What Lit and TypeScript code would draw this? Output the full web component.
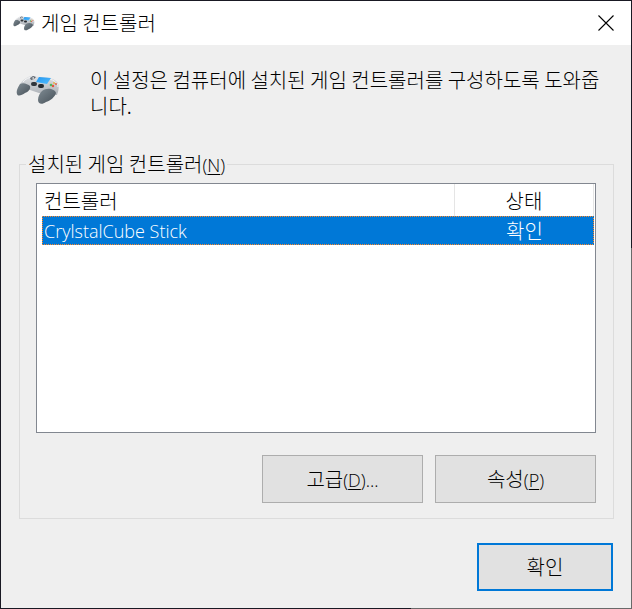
import { LitElement, html, css, svg } from "lit";
import { customElement, state } from "lit/decorators.js";

@customElement("gamepad-icon")
class GamepadIcon extends LitElement {
  static styles = css`
    :host { display: block; }
    svg { display: block; width: 100%; height: auto; }
  `;

  render() {
    return html`<svg viewBox="0 0 44 30" aria-hidden="true">
      <defs>
        <linearGradient id="body" x1="0" y1="0" x2="0" y2="1">
          <stop offset="0" stop-color="#dfe1e4" /><stop offset="1" stop-color="#adb1b7" />
        </linearGradient>
        <linearGradient id="grip" x1="0" y1="0" x2="1" y2="1">
          <stop offset="0" stop-color="#7f8b93" /><stop offset="1" stop-color="#465058" />
        </linearGradient>
        <linearGradient id="screen" x1="0" y1="0" x2="1" y2="1">
          <stop offset="0" stop-color="#2496ee" /><stop offset="1" stop-color="#52bdff" />
        </linearGradient>
      </defs>
      ${svg`
        <path fill="url(#body)" d="M3 11C6 5 10 3 14 1C17 0 20 2 24 2C30 2 37 3 40 6C44 9 43 15 41 20L32 19C29 19 26 19 23 18L14 15L8 15L2 16Z" />
        <path fill="none" stroke="#f4f5f6" stroke-width="1" d="M7 7C9 4 13 2 18 2M33 4C38 5 42 8 42 12" />
        <path fill="url(#grip)" d="M4 9C7 7 12 9 14 11C15 14 12 17 9 18C6 20 2 22 1 19C0 16 2 12 4 9Z" />
        <path fill="url(#grip)" d="M26 16C31 12 39 14 40 18C39 22 34 26 30 27C26 30 22 29 22 25C22 21 24 18 26 16Z" />
        <path fill="url(#screen)" d="M23 2L35 3L31 9L20 7Z" />
        <path fill="#5b626a" d="M14 3L17 1L20 2L18 4L15 5Z" />
        <path fill="#d8dadd" d="M15 3L18 2L18 4Z" />
        <rect x="15" y="7" width="6" height="4" rx="2" fill="#30363c" />
        <rect x="22" y="9" width="6" height="4" rx="2" fill="#252b31" />
        <circle cx="35" cy="10" r="1.3" fill="#52b85c" />
        <circle cx="38" cy="8" r="1" fill="#e8b34a" />
        <circle cx="37" cy="11" r="1.2" fill="#e5533b" />
        <circle cx="40" cy="9" r="1" fill="#e2674d" />
      `}
    </svg>`;
  }
}

@customElement("app-root")
class AppRoot extends LitElement {
  @state() private controllers = [{ name: "CrylstalCube Stick", status: "확인" }];
  @state() private selected = 0;

  static styles = css`
    :host {
      display: block;
      color: #000;
      font-family: "Noto Sans CJK KR", sans-serif;
      font-size: 20px;
      font-weight: 300;
      line-height: 26px;
    }
    * { box-sizing: border-box; }
    .frame {
      min-height: 100vh;
      padding: 1px;
      display: flex;
      background:
        linear-gradient(#191923, #191923) top left / 100% 1px no-repeat,
        linear-gradient(#191923, #191923) top left / 1px 100% no-repeat,
        linear-gradient(#191923 248px, #696969 248px) top right / 1px 100% no-repeat,
        linear-gradient(90deg, #191923 65%, #696969 65%) bottom left / 100% 1px no-repeat;
    }
    .dialog { flex: 1; min-width: 0; display: flex; flex-direction: column; background: #efefef; }
    .titlebar { display: flex; align-items: center; height: 44px; padding-left: 12px; background: #fff; }
    .small { width: 22px; margin-right: 6px; }
    h1 { flex: 1; margin: 0; font-size: inherit; font-weight: inherit; }
    .close { width: 50px; height: 44px; padding: 0; border: 0; background: none; display: grid; place-items: center; }
    .close svg { width: 16px; height: 16px; }
    .intro { display: flex; padding: 22px 24px 0 15px; }
    .large { width: 44px; margin: 8px 30px 0 0; flex: none; }
    .intro p { margin: 0; }
    fieldset {
      flex: 1;
      display: flex;
      flex-direction: column;
      min-width: 0;
      margin: 32px 17px 0 18px;
      padding: 5px 17px 15px 16px;
      border: 1px solid #dcdcdc;
    }
    legend { margin-left: -10px; padding: 0 2px; }
    .latin { font-family: "Open Sans", "Noto Sans", sans-serif; font-size: 18px; font-weight: 300; }
    u { text-decoration-thickness: 1px; text-underline-offset: 2px; }
    .list { flex: 1; padding: 0 1px 0 5px; border: 1px solid #828790; background: #fff; }
    table { width: 100%; border-collapse: separate; border-spacing: 0; table-layout: fixed; }
    th, td { padding: 0 2px; font-weight: inherit; text-align: left; white-space: nowrap; }
    th { height: 32px; padding: 2px 2px 0; border-right: 1px solid #e5e5e5; }
    td { height: 29px; }
    .status { width: 139px; text-align: center; }
    tr.selected {
      --dots: #ff8728 0 1px, #0078d7 1px 2px;
      color: #fff;
      background:
        repeating-linear-gradient(90deg, var(--dots)) top / 100% 1px no-repeat,
        repeating-linear-gradient(90deg, var(--dots)) bottom / 100% 1px no-repeat,
        repeating-linear-gradient(180deg, var(--dots)) left / 1px 100% no-repeat,
        repeating-linear-gradient(180deg, var(--dots)) right / 1px 100% no-repeat,
        #0078d7;
    }
    .actions { display: flex; justify-content: flex-end; gap: 12px; margin-top: 22px; }
    .button {
      width: 161px;
      height: 48px;
      padding: 0;
      border: 1px solid #adadad;
      border-radius: 0;
      background: #e1e1e1;
      color: inherit;
      font: inherit;
    }
    .footer { display: flex; justify-content: flex-end; padding: 24px 18px 17px; }
    .default { width: 136px; border: 2px solid #0078d7; }
  `;

  private action(label: string, key: string, tail = "") {
    return html`<button class="button" type="button">${label}<span class="latin">(<u>${key}</u>)${tail}</span></button>`;
  }

  render() {
    return html`
      <div class="frame"><main class="dialog">
        <header class="titlebar">
          <gamepad-icon class="small"></gamepad-icon>
          <h1>게임 컨트롤러</h1>
          <button class="close" type="button" aria-label="닫기">
            <svg viewBox="0 0 16 16"><path d="M0.5 0.5L15.5 15.5M15.5 0.5L0.5 15.5" stroke="#000" stroke-width="1.1" /></svg>
          </button>
        </header>
        <div class="intro">
          <gamepad-icon class="large"></gamepad-icon>
          <p>이 설정은 컴퓨터에 설치된 게임 컨트롤러를 구성하도록 도와줍니다.</p>
        </div>
        <fieldset>
          <legend>설치된 게임 컨트롤러<span class="latin">(<u>N</u>)</span></legend>
          <div class="list">
            <table>
              <thead><tr><th scope="col">컨트롤러</th><th class="status" scope="col">상태</th></tr></thead>
              <tbody>
                ${this.controllers.map((c, i) => html`
                  <tr class=${i === this.selected ? "selected" : ""} @click=${() => (this.selected = i)}>
                    <td><span class="latin">${c.name}</span></td><td class="status">${c.status}</td>
                  </tr>`)}
              </tbody>
            </table>
          </div>
          <div class="actions">${this.action("고급", "D", "...")}${this.action("속성", "P")}</div>
        </fieldset>
        <footer class="footer"><button class="button default" type="button">확인</button></footer>
      </main></div>
    `;
  }
}
